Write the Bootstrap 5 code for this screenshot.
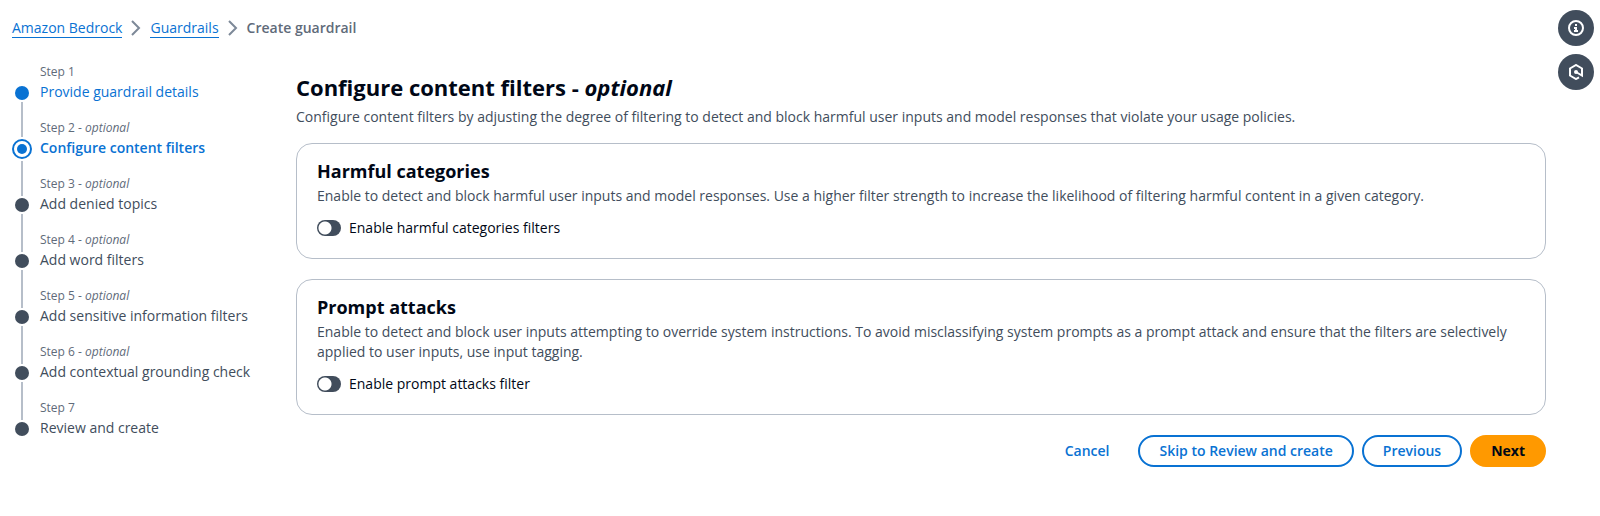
<!DOCTYPE html>
<html lang="en">
<head>
<meta charset="utf-8">
<meta name="viewport" content="width=device-width, initial-scale=1">
<title>Create guardrail</title>
<link href="https://cdn.jsdelivr.net/npm/bootstrap@5.3.0/dist/css/bootstrap.min.css" rel="stylesheet">
<style>
  body { font-family: "Open Sans", "Noto Sans", sans-serif; font-size: 14px; line-height: 20px; color: #000716; }
  .page-main { padding: 18px 12px 0 12px; }
  .crumbs a { color: #0972d3; text-decoration: none; border-bottom: 1px solid #0972d3; line-height: 18px; }
  .crumbs .here { color: #5f6b7a; font-weight: 600; }
  .steps-nav { width: 284px; padding-top: 24px; }
  .step-item { height: 56px; gap: 8px; }
  .marker { width: 20px; }
  .line-up { width: 2px; height: 22px; background: #b6bec9; margin-bottom: 2px; }
  .line-down { width: 2px; background: #b6bec9; margin-top: 2px; }
  .dot { width: 14px; height: 14px; border-radius: 50%; background: #414d5c; flex: none; }
  .step-item:first-child .line-up, .step-item:last-child .line-down { visibility: hidden; }
  .step-item.done .dot { background: #0972d3; }
  .step-item.current .line-up { height: 19px; }
  .step-item.current .dot { width: 20px; height: 20px; border: 2px solid #0972d3; background: #0972d3; background-clip: content-box; padding: 3px; }
  .step-no { font-size: 12px; color: #5f6b7a; }
  .step-name { color: #414d5c; text-decoration: none; }
  .done .step-name { color: #0972d3; }
  .current .step-name { color: #0972d3; font-weight: 600; }
  .content { padding-top: 35px; min-width: 0; }
  h1 { font-size: 22px; line-height: 28px; font-weight: 700; margin-bottom: 6px; }
  h2 { font-size: 18px; line-height: 22px; font-weight: 700; margin-bottom: 4px; }
  .text-desc { color: #414d5c; }
  .panel { border: 1px solid #b6bec9; border-radius: 16px; padding: 16px 20px 20px; margin-bottom: 20px; }
  .form-check.toggle { padding: 0; margin: 12px 0 0; min-height: 20px; gap: 8px; }
  .form-check.toggle .form-check-input { float: none; margin: 0; width: 24px; height: 16px; border: 0; border-radius: 8px; background: radial-gradient(circle 7px at 8px 8px, #fff 6px, transparent 7px) #414d5c; }
  .btn-pill { --bs-btn-font-size: 14px; --bs-btn-line-height: 20px; --bs-btn-font-weight: 600; --bs-btn-padding-y: 4px; --bs-btn-padding-x: 19px; --bs-btn-border-width: 2px; --bs-btn-border-radius: 20px; --bs-btn-color: #0972d3; --bs-btn-border-color: #0972d3; }
  .btn-cancel { --bs-btn-border-color: transparent; }
  .btn-next { --bs-btn-font-weight: 700; --bs-btn-color: #000716; --bs-btn-bg: #ff9900; --bs-btn-border-color: #ff9900; }
  .rail { padding: 10px 6px 0 0; gap: 8px; }
  .rail button { width: 36px; height: 36px; border: 0; border-radius: 50%; background: #414d5c; padding: 0; }
</style>
</head>
<body>
<div class="d-flex">
  <div class="page-main flex-grow-1">
    <nav aria-label="Breadcrumb">
      <ol class="crumbs list-unstyled d-flex align-items-center mb-0">
        <li><a href="#">Amazon Bedrock</a></li>
        <li class="d-flex" aria-hidden="true"><svg width="28" height="20" viewBox="2 0 28 20" fill="none" stroke="#7d8998" stroke-width="2"><path d="M12 3l7 7-7 7"/></svg></li>
        <li><a href="#">Guardrails</a></li>
        <li class="d-flex" aria-hidden="true"><svg width="28" height="20" viewBox="2 0 28 20" fill="none" stroke="#7d8998" stroke-width="2"><path d="M12 3l7 7-7 7"/></svg></li>
        <li class="here" aria-current="page">Create guardrail</li>
      </ol>
    </nav>
    <div class="d-flex">
      <nav class="steps-nav flex-shrink-0" aria-label="Steps">
        <ol class="list-unstyled mb-0">
          <li class="step-item done d-flex"><div class="marker d-flex flex-column align-items-center"><i class="line-up"></i><i class="dot"></i><i class="line-down flex-grow-1"></i></div><div><div class="step-no">Step 1</div><a href="#" class="step-name">Provide guardrail details</a></div></li>
          <li class="step-item current d-flex"><div class="marker d-flex flex-column align-items-center"><i class="line-up"></i><i class="dot"></i><i class="line-down flex-grow-1"></i></div><div><div class="step-no">Step 2 - <em>optional</em></div><div class="step-name">Configure content filters</div></div></li>
          <li class="step-item d-flex"><div class="marker d-flex flex-column align-items-center"><i class="line-up"></i><i class="dot"></i><i class="line-down flex-grow-1"></i></div><div><div class="step-no">Step 3 - <em>optional</em></div><div class="step-name">Add denied topics</div></div></li>
          <li class="step-item d-flex"><div class="marker d-flex flex-column align-items-center"><i class="line-up"></i><i class="dot"></i><i class="line-down flex-grow-1"></i></div><div><div class="step-no">Step 4 - <em>optional</em></div><div class="step-name">Add word filters</div></div></li>
          <li class="step-item d-flex"><div class="marker d-flex flex-column align-items-center"><i class="line-up"></i><i class="dot"></i><i class="line-down flex-grow-1"></i></div><div><div class="step-no">Step 5 - <em>optional</em></div><div class="step-name">Add sensitive information filters</div></div></li>
          <li class="step-item d-flex"><div class="marker d-flex flex-column align-items-center"><i class="line-up"></i><i class="dot"></i><i class="line-down flex-grow-1"></i></div><div><div class="step-no">Step 6 - <em>optional</em></div><div class="step-name">Add contextual grounding check</div></div></li>
          <li class="step-item d-flex"><div class="marker d-flex flex-column align-items-center"><i class="line-up"></i><i class="dot"></i><i class="line-down flex-grow-1"></i></div><div><div class="step-no">Step 7</div><div class="step-name">Review and create</div></div></li>
        </ol>
      </nav>
      <main class="content flex-grow-1">
        <h1>Configure content filters - <em>optional</em></h1>
        <p class="text-desc mb-3">Configure content filters by adjusting the degree of filtering to detect and block harmful user inputs and model responses that violate your usage policies.</p>
        <section class="panel">
          <h2>Harmful categories</h2>
          <p class="text-desc mb-0">Enable to detect and block harmful user inputs and model responses. Use a higher filter strength to increase the likelihood of filtering harmful content in a given category.</p>
          <div class="form-check form-switch toggle d-flex align-items-center">
            <input class="form-check-input" type="checkbox" role="switch" id="harmful">
            <label for="harmful">Enable harmful categories filters</label>
          </div>
        </section>
        <section class="panel">
          <h2>Prompt attacks</h2>
          <p class="text-desc mb-0">Enable to detect and block user inputs attempting to override system instructions. To avoid misclassifying system prompts as a prompt attack and ensure that the filters are selectively applied to user inputs, use input tagging.</p>
          <div class="form-check form-switch toggle d-flex align-items-center">
            <input class="form-check-input" type="checkbox" role="switch" id="prompt">
            <label for="prompt">Enable prompt attacks filter</label>
          </div>
        </section>
        <div class="d-flex justify-content-end gap-2">
          <button type="button" class="btn btn-pill btn-cancel">Cancel</button>
          <button type="button" class="btn btn-pill">Skip to Review and create</button>
          <button type="button" class="btn btn-pill">Previous</button>
          <button type="button" class="btn btn-pill btn-next">Next</button>
        </div>
      </main>
    </div>
  </div>
  <aside class="rail d-flex flex-column flex-shrink-0">
    <button type="button" class="d-flex align-items-center justify-content-center" aria-label="Info"><svg width="16" height="16" viewBox="0 0 16 16" fill="none" stroke="#fff" stroke-width="2"><circle cx="8" cy="8" r="7"/><path d="M8 4v2M6 8h2v3M6 11h4" /></svg></button>
    <button type="button" class="d-flex align-items-center justify-content-center" aria-label="Tutorials"><svg width="16" height="16" viewBox="0 0 16 16" fill="none" stroke="#fff" stroke-width="2"><path d="M11 13.300L8 15 2 11.500v-7L8 1l6 3.500V11.500L8 8"/><circle cx="8" cy="8" r="1" fill="#fff"/></svg></button>
  </aside>
</div>
<script src="https://cdn.jsdelivr.net/npm/bootstrap@5.3.0/dist/js/bootstrap.bundle.min.js"></script>
</body>
</html>
